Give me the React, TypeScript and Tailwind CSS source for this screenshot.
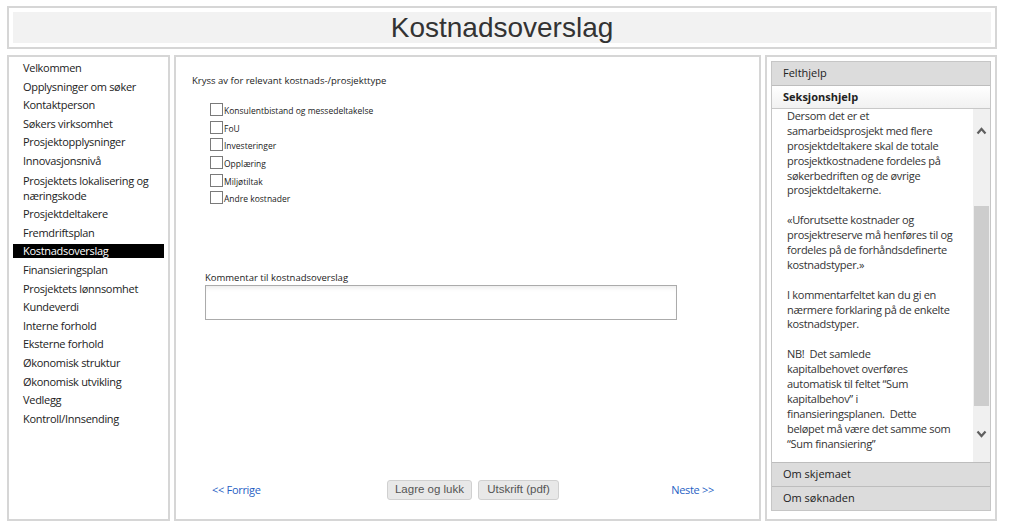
import React from 'react';

const menu = [
  'Velkommen',
  'Opplysninger om søker',
  'Kontaktperson',
  'Søkers virksomhet',
  'Prosjektopplysninger',
  'Innovasjonsnivå',
  'Prosjektets lokalisering og næringskode',
  'Prosjektdeltakere',
  'Fremdriftsplan',
  'Kostnadsoverslag',
  'Finansieringsplan',
  'Prosjektets lønnsomhet',
  'Kundeverdi',
  'Interne forhold',
  'Eksterne forhold',
  'Økonomisk struktur',
  'Økonomisk utvikling',
  'Vedlegg',
  'Kontroll/Innsending',
];

const costTypes = [
  'Konsulentbistand og messedeltakelse',
  'FoU',
  'Investeringer',
  'Opplæring',
  'Miljøtiltak',
  'Andre kostnader',
];

// help text, line by line as it wraps in the panel
const helpLines = [
  'Dersom det er et',
  'samarbeidsprosjekt med flere',
  'prosjektdeltakere skal de totale',
  'prosjektkostnadene fordeles på',
  'søkerbedriften og de øvrige',
  'prosjektdeltakerne.',
  '',
  '«Uforutsette kostnader og',
  'prosjektreserve må henføres til og',
  'fordeles på de forhåndsdefinerte',
  'kostnadstyper.»',
  '',
  'I kommentarfeltet kan du gi en',
  'nærmere forklaring på de enkelte',
  'kostnadstyper.',
  '',
  'NB!\u00a0 Det samlede',
  'kapitalbehovet overføres',
  'automatisk til feltet “Sum',
  'kapitalbehov” i',
  'finansieringsplanen.\u00a0 Dette',
  'beløpet må være det samme som',
  '“Sum finansiering”',
];

const Chevron: React.FC<{ up?: boolean }> = ({ up }) => (
  <svg width="11" height="8" viewBox="0 0 11 8" className="block">
    <polyline
      points={up ? '1.5,6.5 5.5,2 9.5,6.5' : '1.5,1.5 5.5,6 9.5,1.5'}
      fill="none"
      stroke="#5f5f5f"
      strokeWidth="2.2"
    />
  </svg>
);

export default function App() {
  return (
    <div className="w-[1009px] h-[524px] bg-white pt-[6px] pl-[7px] font-['Open_Sans',sans-serif] text-[#222] overflow-hidden">
      {/* title */}
      <div className="w-[990px] h-[43px] border-2 border-[#d6d6d6] p-[4px]">
        <div className="h-[31px] bg-[#f2f2f2] flex items-center justify-center font-['Liberation_Sans',Arial,sans-serif] text-[28px] text-[#333] leading-none">
          Kostnadsoverslag
        </div>
      </div>

      <div className="mt-[6px] flex gap-[4px] h-[466px]">
        {/* section menu */}
        <div className="w-[163px] border-2 border-[#d6d6d6] pt-[4px] px-[4px] flex flex-col gap-[4.6px] text-[11px] tracking-[-0.3px]">
          {menu.map((m) =>
            m.includes('næringskode') ? (
              <div key={m} className="pl-[10px] leading-[15px]">
                Prosjektets lokalisering og
                <br />
                næringskode
              </div>
            ) : (
              <div
                key={m}
                className={
                  m === 'Kostnadsoverslag'
                    ? 'h-[14px] leading-[14px] pl-[10px] bg-black text-white'
                    : 'h-[14px] leading-[14px] pl-[10px]'
                }
              >
                {m}
              </div>
            )
          )}
        </div>

        {/* form */}
        <div className="w-[587px] border-2 border-[#d6d6d6] flex flex-col">
          <div className="pl-[16px] pt-[17px] text-[9.5px] leading-[13px] text-[#222]">
            Kryss av for relevant kostnads-/prosjekttype
          </div>
          <div className="pl-[34px] mt-[16px] flex flex-col gap-[4.7px]">
            {costTypes.map((c) => (
              <label key={c} className="flex items-end h-[13px]">
                <span className="w-[13px] h-[13px] border border-[#7a7a7a] bg-white" />
                <span className="ml-px text-[8.5px] leading-[10px] text-[#222]">{c}</span>
              </label>
            ))}
          </div>

          <div className="pl-[29px] mt-[67px] text-[9.5px] leading-[13px]">Kommentar til kostnadsoverslag</div>
          <div className="ml-[29px] mt-[1px] w-[472px] h-[35px] border border-[#ababab] bg-white shadow-[inset_0_4px_4px_-2px_rgba(0,0,0,0.08)]" />

          <div className="flex-1" />
          <div className="h-[20px] mb-[19px] flex items-center pl-[36px] pr-[45px] text-[11px]">
            <a className="w-[175px] text-[#1f5fc4] tracking-[-0.3px]">&lt;&lt; Forrige</a>
            <div className="flex gap-[6px] font-['Liberation_Sans',Arial,sans-serif] text-[11.5px] text-[#555]">
              <button className="w-[85px] h-[20px] rounded-[3px] border border-[#d0d0d0] bg-[#e8e8e8]">Lagre og lukk</button>
              <button className="w-[81px] h-[20px] rounded-[3px] border border-[#d0d0d0] bg-[#e8e8e8]">Utskrift (pdf)</button>
            </div>
            <a className="ml-auto text-[#1f5fc4] tracking-[-0.3px]">Neste &gt;&gt;</a>
          </div>
        </div>

        {/* help panel */}
        <div className="w-[232px] border-2 border-[#d6d6d6] pt-[4px] px-[4px]">
          <div className="h-[450px] border border-[#c6c6c6] flex flex-col text-[11px]">
            <div className="h-[24px] shrink-0 bg-[#dcdcdc] border-b border-[#bdbdbd] pl-[11px] flex items-center">Felthjelp</div>
            <div className="h-[23px] shrink-0 bg-gradient-to-b from-white to-[#f1f1f1] border-b border-[#c8c8c8] pl-[11px] flex items-center font-bold">
              Seksjonshjelp
            </div>
            <div className="flex-1 flex min-h-0">
              <div className="flex-1 pl-[15px] text-[11px] leading-[14.9px] tracking-[-0.3px] text-[#333] overflow-hidden whitespace-nowrap">
                {helpLines.map((l, i) => (
                  <div key={i} className="h-[14.9px]">{l}</div>
                ))}
              </div>
              <div className="w-[17px] bg-[#f0f0f0] flex flex-col items-center">
                <div className="h-[44px] flex items-center justify-center">
                  <Chevron up />
                </div>
                <div className="mt-[53px] w-[15px] h-[200px] bg-[#cdcdcd]" />
                <div className="flex-1 flex items-center justify-center">
                  <Chevron />
                </div>
              </div>
            </div>
            <div className="h-[24px] shrink-0 bg-[#dcdcdc] border-t border-[#bdbdbd] pl-[11px] flex items-center">Om skjemaet</div>
            <div className="h-[24px] shrink-0 bg-[#dcdcdc] border-t border-[#bdbdbd] pl-[11px] flex items-center">Om søknaden</div>
          </div>
        </div>
      </div>
    </div>
  );
}
